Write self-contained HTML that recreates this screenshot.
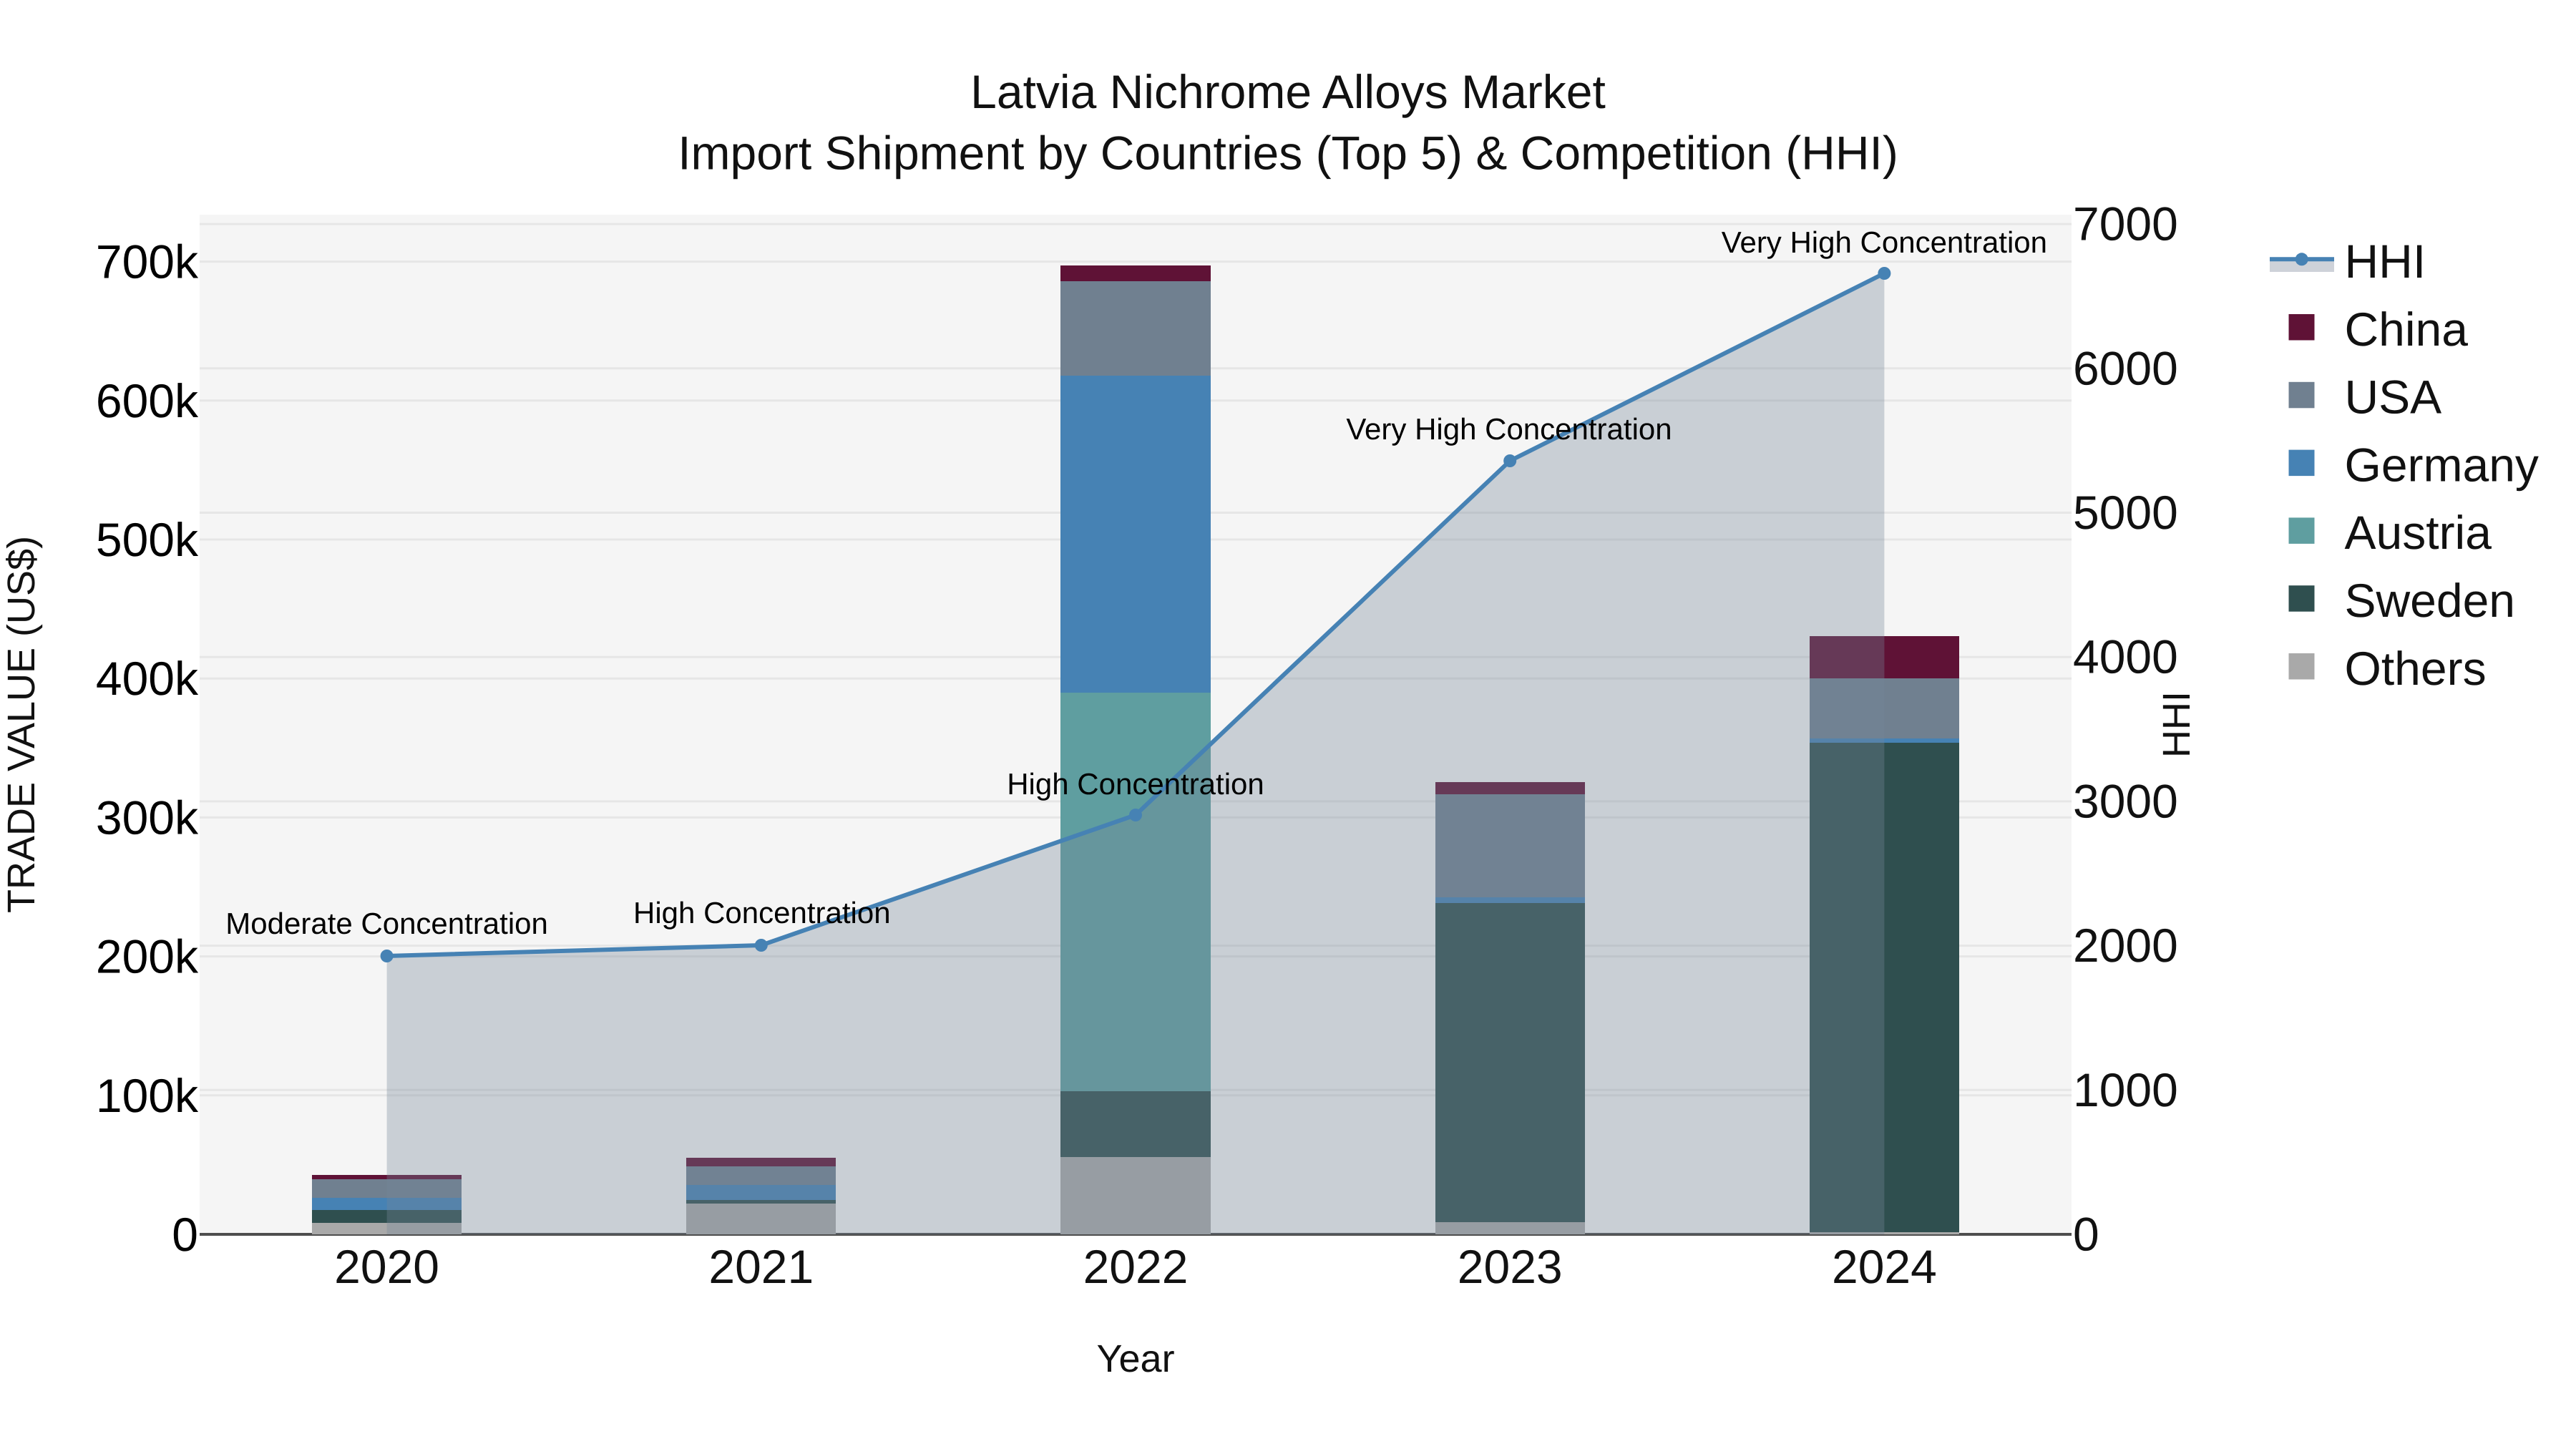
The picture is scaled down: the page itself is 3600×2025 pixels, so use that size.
<!DOCTYPE html>
<html>
<head>
<meta charset="utf-8">
<title>Latvia Nichrome Alloys Market</title>
<style>
html,body{margin:0;padding:0;background:#fff;width:3600px;height:2025px;overflow:hidden}
svg{display:block}
text{font-family:"Liberation Sans",Arial,sans-serif;text-rendering:geometricPrecision;fill:#111}
.t{font-size:66px}
.k{font-size:66px;fill:#000;text-anchor:end}
.r{font-size:66px}
.x{font-size:66px;text-anchor:middle}
.a{font-size:42px;fill:#000;text-anchor:middle}
.l{font-size:66px}
.at{font-size:54px;text-anchor:middle}
</style>
</head>
<body>
<svg width="3600" height="2025" viewBox="0 0 3600 2025" xmlns="http://www.w3.org/2000/svg">
<rect width="3600" height="2025" fill="#fff"/>
<rect x="279" y="300" width="2616" height="1425" fill="#f5f5f5"/>
<g stroke="#e6e6e6" stroke-width="3">
<path d="M279 1530.8H2895M279 1336.6H2895M279 1142.4H2895M279 948.2H2895M279 754H2895M279 559.8H2895M279 365.6H2895"/>
<path d="M279 1523.3H2895M279 1321.6H2895M279 1119.9H2895M279 918.2H2895M279 716.5H2895M279 514.8H2895M279 313.1H2895"/>
</g>
<path d="M279 1725H2895" stroke="#4e4e4e" stroke-width="4"/>
<!-- 2020 -->
<rect x="436" y="1642" width="209" height="6" fill="#5f1236"/>
<rect x="436" y="1648" width="209" height="26" fill="#708090"/>
<rect x="436" y="1674" width="209" height="17" fill="#4682b4"/>
<rect x="436" y="1691" width="209" height="18" fill="#2f4f4f"/>
<rect x="436" y="1709" width="209" height="16" fill="#a9a9a9"/>
<!-- 2021 -->
<rect x="959" y="1618" width="209" height="12" fill="#5f1236"/>
<rect x="959" y="1630" width="209" height="26" fill="#708090"/>
<rect x="959" y="1656" width="209" height="21" fill="#4682b4"/>
<rect x="959" y="1677" width="209" height="5" fill="#2f4f4f"/>
<rect x="959" y="1682" width="209" height="43" fill="#a9a9a9"/>
<!-- 2022 -->
<rect x="1482" y="371" width="210" height="22" fill="#5f1236"/>
<rect x="1482" y="393" width="210" height="132" fill="#708090"/>
<rect x="1482" y="525" width="210" height="443" fill="#4682b4"/>
<rect x="1482" y="968" width="210" height="557" fill="#5f9ea0"/>
<rect x="1482" y="1525" width="210" height="92" fill="#2f4f4f"/>
<rect x="1482" y="1617" width="210" height="108" fill="#a9a9a9"/>
<!-- 2023 -->
<rect x="2006" y="1093" width="209" height="17" fill="#5f1236"/>
<rect x="2006" y="1110" width="209" height="144" fill="#708090"/>
<rect x="2006" y="1254" width="209" height="8" fill="#4682b4"/>
<rect x="2006" y="1262" width="209" height="446" fill="#2f4f4f"/>
<rect x="2006" y="1708" width="209" height="17" fill="#a9a9a9"/>
<!-- 2024 -->
<rect x="2529" y="889" width="209" height="59" fill="#5f1236"/>
<rect x="2529" y="948" width="209" height="84" fill="#708090"/>
<rect x="2529" y="1032" width="209" height="6" fill="#4682b4"/>
<rect x="2529" y="1038" width="209" height="684" fill="#2f4f4f"/>
<rect x="2529" y="1722" width="209" height="3" fill="#a9a9a9"/>
<!-- HHI area and line -->
<path d="M540.6 1336L1063.8 1321L1587 1139L2110.2 644L2633.4 382V1725H540.6Z" fill="#758798" fill-opacity=".34"/>
<path d="M540.6 1336L1063.8 1321L1587 1139L2110.2 644L2633.4 382" fill="none" stroke="#4682b4" stroke-width="6" stroke-linejoin="round"/>
<g fill="#4682b4">
<circle cx="540.6" cy="1336" r="9"/><circle cx="1063.8" cy="1321" r="9"/><circle cx="1587" cy="1139" r="9"/><circle cx="2110.2" cy="644" r="9"/><circle cx="2633.4" cy="382" r="9"/>
</g>
<!-- annotations -->
<text class="a" x="540.6" y="1305">Moderate Concentration</text>
<text class="a" x="1064.8" y="1290">High Concentration</text>
<text class="a" x="1587" y="1110">High Concentration</text>
<text class="a" x="2109" y="614">Very High Concentration</text>
<text class="a" x="2633.4" y="353">Very High Concentration</text>
<!-- title -->
<text class="t" x="1800" y="151" text-anchor="middle">Latvia Nichrome Alloys Market</text>
<text class="t" x="1800" y="236.5" text-anchor="middle">Import Shipment by Countries (Top 5) &amp; Competition (HHI)</text>
<!-- left ticks -->
<text class="k" x="277" y="388.6">700k</text>
<text class="k" x="277" y="582.8">600k</text>
<text class="k" x="277" y="777">500k</text>
<text class="k" x="277" y="971.2">400k</text>
<text class="k" x="277" y="1165.4">300k</text>
<text class="k" x="277" y="1359.6">200k</text>
<text class="k" x="277" y="1553.8">100k</text>
<text class="k" x="277" y="1748">0</text>
<!-- right ticks -->
<text class="r" x="2897" y="335.6">7000</text>
<text class="r" x="2897" y="537.3">6000</text>
<text class="r" x="2897" y="739">5000</text>
<text class="r" x="2897" y="940.7">4000</text>
<text class="r" x="2897" y="1142.4">3000</text>
<text class="r" x="2897" y="1344.1">2000</text>
<text class="r" x="2897" y="1545.8">1000</text>
<text class="r" x="2897" y="1747.5">0</text>
<!-- x ticks -->
<text class="x" x="540.6" y="1793">2020</text>
<text class="x" x="1063.8" y="1793">2021</text>
<text class="x" x="1587" y="1793">2022</text>
<text class="x" x="2110.2" y="1793">2023</text>
<text class="x" x="2633.4" y="1793">2024</text>
<!-- axis titles -->
<text class="at" x="1587" y="1917">Year</text>
<text class="at" transform="translate(48 1012.5) rotate(-90)">TRADE VALUE (US$)</text>
<text class="at" transform="translate(3060 1012.5) rotate(-90)">HHI</text>
<!-- legend -->
<rect x="3172" y="362" width="90" height="18" fill="#ced2d9"/>
<path d="M3172 362.3H3262" stroke="#4682b4" stroke-width="6"/>
<circle cx="3216.7" cy="362.3" r="9" fill="#4682b4"/>
<rect x="3198.5" y="439" width="36" height="36.5" fill="#5f1236"/>
<rect x="3198.5" y="533.8" width="36" height="36.5" fill="#708090"/>
<rect x="3198.5" y="628.6" width="36" height="36.5" fill="#4682b4"/>
<rect x="3198.5" y="723.4" width="36" height="36.5" fill="#5f9ea0"/>
<rect x="3198.5" y="818.2" width="36" height="36.5" fill="#2f4f4f"/>
<rect x="3198.5" y="913" width="36" height="36.5" fill="#a9a9a9"/>
<text class="l" x="3276.5" y="388">HHI</text>
<text class="l" x="3276.5" y="482.8">China</text>
<text class="l" x="3276.5" y="577.6">USA</text>
<text class="l" x="3276.5" y="672.4">Germany</text>
<text class="l" x="3276.5" y="767.2">Austria</text>
<text class="l" x="3276.5" y="862">Sweden</text>
<text class="l" x="3276.5" y="956.8">Others</text>
</svg>
</body>
</html>
